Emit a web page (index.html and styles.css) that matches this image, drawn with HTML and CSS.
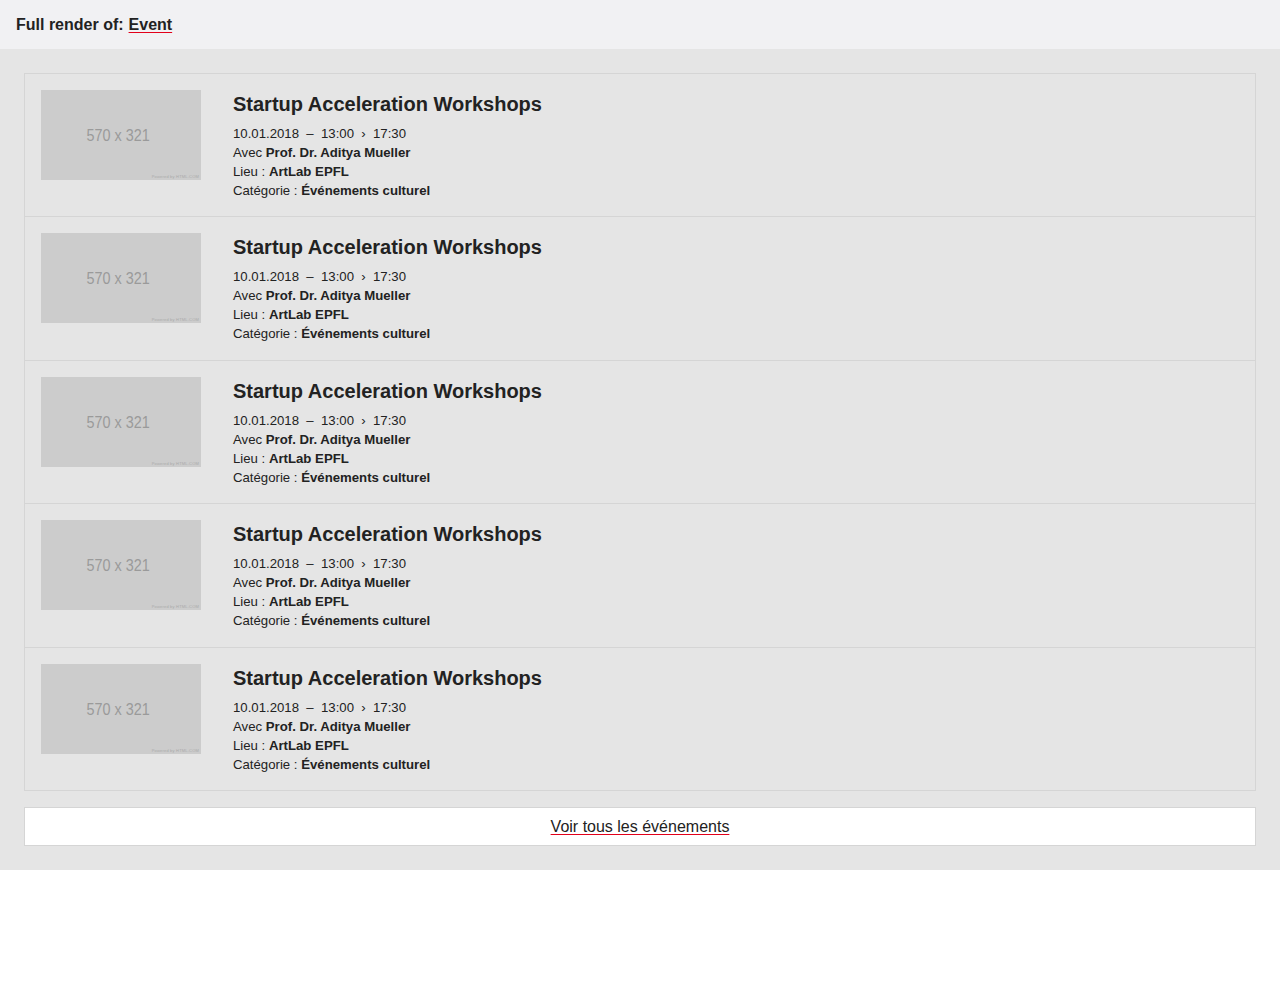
FILE: index.html
```html
<!DOCTYPE html>
<html lang="fr">
<head>
<meta charset="utf-8">
<title>Event</title>
<link rel="stylesheet" href="styles.css">
</head>
<body>
<header class="topbar">Full render of: <a href="#" class="link">Event</a></header>
<main class="section">
  <ul class="list">
    <li class="item">
      <div class="thumb"><span class="thumb-label">570 x 321</span><span class="thumb-credit">Powered by HTML.COM</span></div>
      <div class="info">
        <h3 class="title">Startup Acceleration Workshops</h3>
        <p class="line">10.01.2018 &nbsp;–&nbsp; 13:00 &nbsp;›&nbsp; 17:30</p>
        <p class="line">Avec <b>Prof. Dr. Aditya Mueller</b></p>
        <p class="line">Lieu : <b>ArtLab EPFL</b></p>
        <p class="line">Catégorie : <b>Événements culturel</b></p>
      </div>
    </li>
    <li class="item">
      <div class="thumb"><span class="thumb-label">570 x 321</span><span class="thumb-credit">Powered by HTML.COM</span></div>
      <div class="info">
        <h3 class="title">Startup Acceleration Workshops</h3>
        <p class="line">10.01.2018 &nbsp;–&nbsp; 13:00 &nbsp;›&nbsp; 17:30</p>
        <p class="line">Avec <b>Prof. Dr. Aditya Mueller</b></p>
        <p class="line">Lieu : <b>ArtLab EPFL</b></p>
        <p class="line">Catégorie : <b>Événements culturel</b></p>
      </div>
    </li>
    <li class="item">
      <div class="thumb"><span class="thumb-label">570 x 321</span><span class="thumb-credit">Powered by HTML.COM</span></div>
      <div class="info">
        <h3 class="title">Startup Acceleration Workshops</h3>
        <p class="line">10.01.2018 &nbsp;–&nbsp; 13:00 &nbsp;›&nbsp; 17:30</p>
        <p class="line">Avec <b>Prof. Dr. Aditya Mueller</b></p>
        <p class="line">Lieu : <b>ArtLab EPFL</b></p>
        <p class="line">Catégorie : <b>Événements culturel</b></p>
      </div>
    </li>
    <li class="item">
      <div class="thumb"><span class="thumb-label">570 x 321</span><span class="thumb-credit">Powered by HTML.COM</span></div>
      <div class="info">
        <h3 class="title">Startup Acceleration Workshops</h3>
        <p class="line">10.01.2018 &nbsp;–&nbsp; 13:00 &nbsp;›&nbsp; 17:30</p>
        <p class="line">Avec <b>Prof. Dr. Aditya Mueller</b></p>
        <p class="line">Lieu : <b>ArtLab EPFL</b></p>
        <p class="line">Catégorie : <b>Événements culturel</b></p>
      </div>
    </li>
    <li class="item">
      <div class="thumb"><span class="thumb-label">570 x 321</span><span class="thumb-credit">Powered by HTML.COM</span></div>
      <div class="info">
        <h3 class="title">Startup Acceleration Workshops</h3>
        <p class="line">10.01.2018 &nbsp;–&nbsp; 13:00 &nbsp;›&nbsp; 17:30</p>
        <p class="line">Avec <b>Prof. Dr. Aditya Mueller</b></p>
        <p class="line">Lieu : <b>ArtLab EPFL</b></p>
        <p class="line">Catégorie : <b>Événements culturel</b></p>
      </div>
    </li>
  </ul>
  <div class="more"><a href="#" class="link">Voir tous les événements</a></div>
</main>
</body>
</html>
```

FILE: styles.css
```css
* { box-sizing: border-box; }
body {
  margin: 0;
  font-family: "Liberation Sans", Arial, sans-serif;
  color: #222;
  background: #fff;
}
.link {
  color: #222;
  text-decoration: underline;
  text-decoration-color: #e2001a;
  text-underline-offset: 2px;
}
.topbar {
  height: 49px;
  background: #f1f1f3;
  padding: 0 16px;
  display: flex;
  align-items: center;
  gap: 5px;
  font-size: 16px;
  font-weight: bold;
}
.section {
  background: #e5e5e5;
  padding: 24px;
}
.list {
  list-style: none;
  margin: 0;
  padding: 0;
  border: 1px solid #d5d5d5;
}
.item {
  display: flex;
  gap: 32px;
  padding: 16px;
  border-top: 1px solid #d5d5d5;
  height: 143.5px;
}
.item:first-child { border-top: 0; height: 142px; }
.thumb {
  position: relative;
  flex: 0 0 160px;
  height: 90px;
  background: #cccccc;
  display: flex;
  align-items: center;
  justify-content: center;
}
.thumb-label {
  color: #9a9a9a;
  font-size: 16px;
  display: inline-block;
  transform: scaleX(0.9);
  margin: 2px 6px 0 0;
}
.thumb-credit {
  position: absolute;
  right: 2px;
  bottom: 1px;
  font-size: 4px;
  color: #aaa;
  letter-spacing: 0.2px;
}
.info { display: flex; flex-direction: column; }
.title {
  margin: 0 0 6px;
  font-size: 20px;
  line-height: 28px;
  font-weight: bold;
}
.line {
  margin: 0;
  font-size: 13.2px;
  line-height: 19px;
}
.line b { font-weight: bold; }
.more {
  margin-top: 16px;
  background: #fff;
  border: 1px solid #d5d5d5;
  height: 39px;
  display: flex;
  align-items: center;
  justify-content: center;
  font-size: 16px;
}
```
